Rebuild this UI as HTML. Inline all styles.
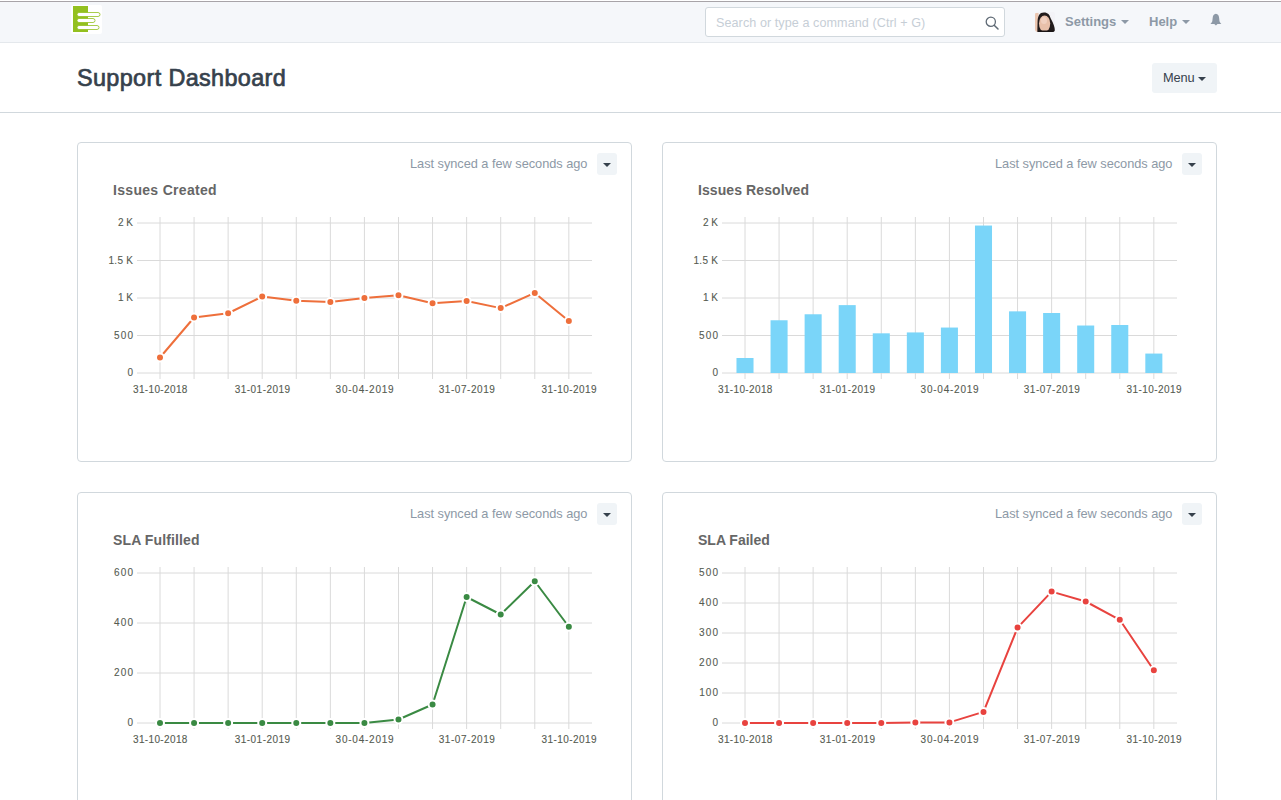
<!DOCTYPE html>
<html><head><meta charset="utf-8">
<style>
html,body{margin:0;padding:0;}
body{width:1281px;height:800px;overflow:hidden;position:relative;background:#fff;font-family:"Liberation Sans", sans-serif;}
.topline{position:absolute;left:0;top:1px;width:1281px;height:1px;background:#a8a4a8;}
.nav{position:absolute;left:0;top:2px;width:1281px;height:40px;background:#f5f7fa;border-bottom:1px solid #e4e8ec;}
.search{position:absolute;left:705px;top:7px;width:298px;height:28px;border:1px solid #d1d8dd;border-radius:3px;background:#fff;}
.search .ph{position:absolute;left:10px;top:8px;font-size:12.6px;letter-spacing:0.07px;color:#c6ced6;white-space:nowrap;}
.navtxt{position:absolute;top:14px;font-size:13px;font-weight:bold;color:#8d99a6;white-space:nowrap;}
.ncaret{position:absolute;width:0;height:0;border-left:4px solid transparent;border-right:4px solid transparent;border-top:4px solid #8d99a6;}
.header{position:absolute;left:0;top:43px;width:1281px;height:69px;background:#fff;border-bottom:1px solid #d1d8dd;}
.h1{position:absolute;left:77px;top:65px;font-size:23.4px;letter-spacing:0.37px;color:#36414c;white-space:nowrap;-webkit-text-stroke:0.7px #36414c;}
.menubtn{position:absolute;left:1152px;top:63px;width:65px;height:30px;background:#f0f4f7;border-radius:3px;}
.menubtn span{position:absolute;left:11px;top:7.4px;font-size:12.8px;letter-spacing:-0.15px;color:#36414c;}
.card{position:absolute;width:553px;height:318px;border:1px solid #d1d8dd;border-radius:4px;background:#fff;}
.synced{position:absolute;font-size:12.8px;letter-spacing:-0.04px;color:#8d99a6;white-space:nowrap;}
.ddbtn{position:absolute;width:20px;height:22px;background:#f0f4f7;border-radius:3px;}
.caret{position:absolute;left:6px;top:10px;width:0;height:0;border-left:4px solid transparent;border-right:4px solid transparent;border-top:4px solid #36414c;}
.ctitle{position:absolute;font-size:14px;font-weight:bold;color:#666;white-space:nowrap;}
svg.charts{position:absolute;left:0;top:0;}
svg text{font-family:"Liberation Sans", sans-serif;}
</style></head><body>
<div class="topline"></div>
<div class="nav"></div>
<svg style="position:absolute;left:70px;top:4px" width="33" height="32" viewBox="0 0 33 32">
<rect x="1" y="1" width="31" height="29" rx="2" fill="#fff"/>
<rect x="3" y="2" width="15" height="26" fill="#93c01f"/>
<rect x="7" y="8.5" width="23" height="4" rx="2" fill="#fff" stroke="#93c01f" stroke-width="0.8"/>
<rect x="7" y="14.5" width="18" height="4" rx="2" fill="#fff" stroke="#93c01f" stroke-width="0.8"/>
<rect x="7" y="21.5" width="22" height="4" rx="2" fill="#fff" stroke="#93c01f" stroke-width="0.8"/>
</svg>
<div class="search"><span class="ph">Search or type a command (Ctrl + G)</span>
<svg style="position:absolute;left:279px;top:8px" width="14" height="14" viewBox="0 0 14 14"><circle cx="5.8" cy="5.8" r="4.6" fill="none" stroke="#5f6a75" stroke-width="1.3"/><line x1="9.2" y1="9.2" x2="13" y2="13" stroke="#5f6a75" stroke-width="1.5" stroke-linecap="round"/></svg>
</div>
<svg style="position:absolute;left:1035px;top:12px" width="20" height="20" viewBox="0 0 20 20">
<defs><clipPath id="avc"><rect x="0" y="0" width="20" height="20" rx="3"/></clipPath></defs>
<g clip-path="url(#avc)">
<rect width="20" height="20" fill="#f2f2f5"/>
<rect x="0" y="1" width="3.5" height="19" fill="#ebc6b0"/>
<path d="M2.3,20 L2.6,9 C3,4 4.5,0.6 9,0.6 C13,0.6 14.5,3 15.5,6 C17.5,10 20,14 20,20 Z" fill="#221c1c"/>
<ellipse cx="9.6" cy="11.6" rx="5.6" ry="8.2" fill="#e8c0aa"/>
<ellipse cx="9" cy="8.5" rx="3" ry="3.5" fill="#f0d0c0"/>
<path d="M12.5,0 L20,0 L20,12 C18.5,7 16,2.5 12.5,0Z" fill="#f3f3f7"/>
<rect x="3" y="18.5" width="17" height="1.5" fill="#1a1515"/>
</g></svg>
<div class="navtxt" style="left:1065px">Settings</div>
<div class="ncaret" style="left:1121px;top:20px"></div>
<div class="navtxt" style="left:1149px">Help</div>
<div class="ncaret" style="left:1182px;top:20px"></div>
<svg style="position:absolute;left:1210px;top:13px" width="12" height="14" viewBox="0 0 12 14"><path d="M5.9,0.8 C3.8,1 2.9,2.5 2.7,4.8 L2.3,8.2 C2,9.4 1,10.2 0.4,10.9 L11.4,10.9 C10.8,10.2 9.8,9.4 9.5,8.2 L9.1,4.8 C8.9,2.5 8,1 5.9,0.8Z" fill="#8d99a6"/><path d="M4.3,10.9 L7.5,10.9 L5.9,12.6Z" fill="#8d99a6"/></svg>
<div class="header"></div>
<div class="h1">Support Dashboard</div>
<div class="menubtn"><span>Menu</span><span class="caret" style="left:46px;top:14px"></span></div>
<div class="card" style="left:77px;top:142px"></div>
<div class="synced" style="left:410px;top:156px">Last synced a few seconds ago</div>
<div class="ddbtn" style="left:597px;top:153px"><span class="caret"></span></div>
<div class="ctitle" style="left:113px;top:182px;letter-spacing:0.31px">Issues Created</div>
<div class="card" style="left:662px;top:142px"></div>
<div class="synced" style="left:995px;top:156px">Last synced a few seconds ago</div>
<div class="ddbtn" style="left:1182px;top:153px"><span class="caret"></span></div>
<div class="ctitle" style="left:698px;top:182px;letter-spacing:0.09px">Issues Resolved</div>
<div class="card" style="left:77px;top:492px"></div>
<div class="synced" style="left:410px;top:506px">Last synced a few seconds ago</div>
<div class="ddbtn" style="left:597px;top:503px"><span class="caret"></span></div>
<div class="ctitle" style="left:113px;top:532px;letter-spacing:0.12px">SLA Fulfilled</div>
<div class="card" style="left:662px;top:492px"></div>
<div class="synced" style="left:995px;top:506px">Last synced a few seconds ago</div>
<div class="ddbtn" style="left:1182px;top:503px"><span class="caret"></span></div>
<div class="ctitle" style="left:698px;top:532px;letter-spacing:0.0px">SLA Failed</div>

<svg class="charts" width="1281" height="800"><g transform="translate(0,0)"><g stroke="#dadada" stroke-width="1" shape-rendering="auto"><line x1="137" y1="373.00" x2="592" y2="373.00" /><line x1="137" y1="335.50" x2="592" y2="335.50" /><line x1="137" y1="298.00" x2="592" y2="298.00" /><line x1="137" y1="260.50" x2="592" y2="260.50" /><line x1="137" y1="223.00" x2="592" y2="223.00" /><line x1="160.00" y1="217" x2="160.00" y2="379" /><line x1="194.07" y1="217" x2="194.07" y2="379" /><line x1="228.14" y1="217" x2="228.14" y2="379" /><line x1="262.21" y1="217" x2="262.21" y2="379" /><line x1="296.28" y1="217" x2="296.28" y2="379" /><line x1="330.35" y1="217" x2="330.35" y2="379" /><line x1="364.42" y1="217" x2="364.42" y2="379" /><line x1="398.49" y1="217" x2="398.49" y2="379" /><line x1="432.56" y1="217" x2="432.56" y2="379" /><line x1="466.63" y1="217" x2="466.63" y2="379" /><line x1="500.70" y1="217" x2="500.70" y2="379" /><line x1="534.77" y1="217" x2="534.77" y2="379" /><line x1="568.84" y1="217" x2="568.84" y2="379" /></g><g fill="#555b51" font-size="10" stroke="#555b51" stroke-width="0.1"><text x="133.00" y="376.20" text-anchor="end" letter-spacing="0.0">0</text><text x="134.10" y="338.70" text-anchor="end" letter-spacing="1.1">500</text><text x="133.00" y="301.20" text-anchor="end" letter-spacing="0.0">1 K</text><text x="133.30" y="263.70" text-anchor="end" letter-spacing="0.3">1.5 K</text><text x="133.00" y="226.20" text-anchor="end" letter-spacing="0.0">2 K</text><text x="160.38" y="393" text-anchor="middle" letter-spacing="0.36">31-10-2018</text><text x="262.64" y="393" text-anchor="middle" letter-spacing="0.46">31-01-2019</text><text x="365.00" y="393" text-anchor="middle" letter-spacing="0.77">30-04-2019</text><text x="467.11" y="393" text-anchor="middle" letter-spacing="0.56">31-07-2019</text><text x="569.25" y="393" text-anchor="middle" letter-spacing="0.42">31-10-2019</text></g><path d="M160.00,357.48L194.07,317.50L228.14,313.23L262.21,296.50L296.28,300.70L330.35,301.98L364.42,298.00L398.49,295.30L432.56,303.25L466.63,300.93L500.70,308.12L534.77,292.90L568.84,320.95" fill="none" stroke="#ee6f3b" stroke-width="2" stroke-linejoin="round" /><g fill="#ee6f3b" stroke="#fff" stroke-width="2"><circle cx="160.00" cy="357.48" r="4" /><circle cx="194.07" cy="317.50" r="4" /><circle cx="228.14" cy="313.23" r="4" /><circle cx="262.21" cy="296.50" r="4" /><circle cx="296.28" cy="300.70" r="4" /><circle cx="330.35" cy="301.98" r="4" /><circle cx="364.42" cy="298.00" r="4" /><circle cx="398.49" cy="295.30" r="4" /><circle cx="432.56" cy="303.25" r="4" /><circle cx="466.63" cy="300.93" r="4" /><circle cx="500.70" cy="308.12" r="4" /><circle cx="534.77" cy="292.90" r="4" /><circle cx="568.84" cy="320.95" r="4" /></g></g><g transform="translate(585,0)"><g stroke="#dadada" stroke-width="1" shape-rendering="auto"><line x1="137" y1="373.00" x2="592" y2="373.00" /><line x1="137" y1="335.50" x2="592" y2="335.50" /><line x1="137" y1="298.00" x2="592" y2="298.00" /><line x1="137" y1="260.50" x2="592" y2="260.50" /><line x1="137" y1="223.00" x2="592" y2="223.00" /><line x1="160.00" y1="217" x2="160.00" y2="379" /><line x1="194.07" y1="217" x2="194.07" y2="379" /><line x1="228.14" y1="217" x2="228.14" y2="379" /><line x1="262.21" y1="217" x2="262.21" y2="379" /><line x1="296.28" y1="217" x2="296.28" y2="379" /><line x1="330.35" y1="217" x2="330.35" y2="379" /><line x1="364.42" y1="217" x2="364.42" y2="379" /><line x1="398.49" y1="217" x2="398.49" y2="379" /><line x1="432.56" y1="217" x2="432.56" y2="379" /><line x1="466.63" y1="217" x2="466.63" y2="379" /><line x1="500.70" y1="217" x2="500.70" y2="379" /><line x1="534.77" y1="217" x2="534.77" y2="379" /><line x1="568.84" y1="217" x2="568.84" y2="379" /></g><g fill="#555b51" font-size="10" stroke="#555b51" stroke-width="0.1"><text x="133.00" y="376.20" text-anchor="end" letter-spacing="0.0">0</text><text x="134.10" y="338.70" text-anchor="end" letter-spacing="1.1">500</text><text x="133.00" y="301.20" text-anchor="end" letter-spacing="0.0">1 K</text><text x="133.30" y="263.70" text-anchor="end" letter-spacing="0.3">1.5 K</text><text x="133.00" y="226.20" text-anchor="end" letter-spacing="0.0">2 K</text><text x="160.38" y="393" text-anchor="middle" letter-spacing="0.36">31-10-2018</text><text x="262.64" y="393" text-anchor="middle" letter-spacing="0.46">31-01-2019</text><text x="365.00" y="393" text-anchor="middle" letter-spacing="0.77">30-04-2019</text><text x="467.11" y="393" text-anchor="middle" letter-spacing="0.56">31-07-2019</text><text x="569.25" y="393" text-anchor="middle" letter-spacing="0.42">31-10-2019</text></g><g fill="#7ad5f9"><rect x="151.48" y="358.00" width="17.04" height="15.00" /><rect x="185.55" y="320.27" width="17.04" height="52.73" /><rect x="219.62" y="314.27" width="17.04" height="58.73" /><rect x="253.69" y="305.12" width="17.04" height="67.88" /><rect x="287.76" y="333.32" width="17.04" height="39.68" /><rect x="321.83" y="332.43" width="17.04" height="40.57" /><rect x="355.90" y="327.55" width="17.04" height="45.45" /><rect x="389.97" y="225.55" width="17.04" height="147.45" /><rect x="424.04" y="311.35" width="17.04" height="61.65" /><rect x="458.11" y="313.00" width="17.04" height="60.00" /><rect x="492.18" y="325.52" width="17.04" height="47.48" /><rect x="526.25" y="325.00" width="17.04" height="48.00" /><rect x="560.32" y="353.57" width="17.04" height="19.43" /></g></g><g transform="translate(0,350)"><g stroke="#dadada" stroke-width="1" shape-rendering="auto"><line x1="137" y1="373.00" x2="592" y2="373.00" /><line x1="137" y1="323.00" x2="592" y2="323.00" /><line x1="137" y1="273.00" x2="592" y2="273.00" /><line x1="137" y1="223.00" x2="592" y2="223.00" /><line x1="160.00" y1="217" x2="160.00" y2="379" /><line x1="194.07" y1="217" x2="194.07" y2="379" /><line x1="228.14" y1="217" x2="228.14" y2="379" /><line x1="262.21" y1="217" x2="262.21" y2="379" /><line x1="296.28" y1="217" x2="296.28" y2="379" /><line x1="330.35" y1="217" x2="330.35" y2="379" /><line x1="364.42" y1="217" x2="364.42" y2="379" /><line x1="398.49" y1="217" x2="398.49" y2="379" /><line x1="432.56" y1="217" x2="432.56" y2="379" /><line x1="466.63" y1="217" x2="466.63" y2="379" /><line x1="500.70" y1="217" x2="500.70" y2="379" /><line x1="534.77" y1="217" x2="534.77" y2="379" /><line x1="568.84" y1="217" x2="568.84" y2="379" /></g><g fill="#555b51" font-size="10" stroke="#555b51" stroke-width="0.1"><text x="133.00" y="376.20" text-anchor="end" letter-spacing="0.0">0</text><text x="134.20" y="326.20" text-anchor="end" letter-spacing="1.2">200</text><text x="134.20" y="276.20" text-anchor="end" letter-spacing="1.2">400</text><text x="134.20" y="226.20" text-anchor="end" letter-spacing="1.2">600</text><text x="160.38" y="393" text-anchor="middle" letter-spacing="0.36">31-10-2018</text><text x="262.64" y="393" text-anchor="middle" letter-spacing="0.46">31-01-2019</text><text x="365.00" y="393" text-anchor="middle" letter-spacing="0.77">30-04-2019</text><text x="467.11" y="393" text-anchor="middle" letter-spacing="0.56">31-07-2019</text><text x="569.25" y="393" text-anchor="middle" letter-spacing="0.42">31-10-2019</text></g><path d="M160.00,373.00L194.07,373.00L228.14,373.00L262.21,373.00L296.28,373.00L330.35,373.00L364.42,373.00L398.49,369.50L432.56,354.50L466.63,247.00L500.70,264.50L534.77,231.25L568.84,276.75" fill="none" stroke="#3a8a43" stroke-width="2" stroke-linejoin="round" /><g fill="#3a8a43" stroke="#fff" stroke-width="2"><circle cx="160.00" cy="373.00" r="4" /><circle cx="194.07" cy="373.00" r="4" /><circle cx="228.14" cy="373.00" r="4" /><circle cx="262.21" cy="373.00" r="4" /><circle cx="296.28" cy="373.00" r="4" /><circle cx="330.35" cy="373.00" r="4" /><circle cx="364.42" cy="373.00" r="4" /><circle cx="398.49" cy="369.50" r="4" /><circle cx="432.56" cy="354.50" r="4" /><circle cx="466.63" cy="247.00" r="4" /><circle cx="500.70" cy="264.50" r="4" /><circle cx="534.77" cy="231.25" r="4" /><circle cx="568.84" cy="276.75" r="4" /></g></g><g transform="translate(585,350)"><g stroke="#dadada" stroke-width="1" shape-rendering="auto"><line x1="137" y1="373.00" x2="592" y2="373.00" /><line x1="137" y1="343.00" x2="592" y2="343.00" /><line x1="137" y1="313.00" x2="592" y2="313.00" /><line x1="137" y1="283.00" x2="592" y2="283.00" /><line x1="137" y1="253.00" x2="592" y2="253.00" /><line x1="137" y1="223.00" x2="592" y2="223.00" /><line x1="160.00" y1="217" x2="160.00" y2="379" /><line x1="194.07" y1="217" x2="194.07" y2="379" /><line x1="228.14" y1="217" x2="228.14" y2="379" /><line x1="262.21" y1="217" x2="262.21" y2="379" /><line x1="296.28" y1="217" x2="296.28" y2="379" /><line x1="330.35" y1="217" x2="330.35" y2="379" /><line x1="364.42" y1="217" x2="364.42" y2="379" /><line x1="398.49" y1="217" x2="398.49" y2="379" /><line x1="432.56" y1="217" x2="432.56" y2="379" /><line x1="466.63" y1="217" x2="466.63" y2="379" /><line x1="500.70" y1="217" x2="500.70" y2="379" /><line x1="534.77" y1="217" x2="534.77" y2="379" /><line x1="568.84" y1="217" x2="568.84" y2="379" /></g><g fill="#555b51" font-size="10" stroke="#555b51" stroke-width="0.1"><text x="133.00" y="376.20" text-anchor="end" letter-spacing="0.0">0</text><text x="134.00" y="346.20" text-anchor="end" letter-spacing="1.0">100</text><text x="134.20" y="316.20" text-anchor="end" letter-spacing="1.2">200</text><text x="134.20" y="286.20" text-anchor="end" letter-spacing="1.2">300</text><text x="134.20" y="256.20" text-anchor="end" letter-spacing="1.2">400</text><text x="134.10" y="226.20" text-anchor="end" letter-spacing="1.1">500</text><text x="160.38" y="393" text-anchor="middle" letter-spacing="0.36">31-10-2018</text><text x="262.64" y="393" text-anchor="middle" letter-spacing="0.46">31-01-2019</text><text x="365.00" y="393" text-anchor="middle" letter-spacing="0.77">30-04-2019</text><text x="467.11" y="393" text-anchor="middle" letter-spacing="0.56">31-07-2019</text><text x="569.25" y="393" text-anchor="middle" letter-spacing="0.42">31-10-2019</text></g><path d="M160.00,373.00L194.07,373.00L228.14,373.00L262.21,373.00L296.28,373.00L330.35,372.40L364.42,372.40L398.49,361.90L432.56,277.60L466.63,241.60L500.70,251.50L534.77,269.80L568.84,320.20" fill="none" stroke="#e8433f" stroke-width="2" stroke-linejoin="round" /><g fill="#e8433f" stroke="#fff" stroke-width="2"><circle cx="160.00" cy="373.00" r="4" /><circle cx="194.07" cy="373.00" r="4" /><circle cx="228.14" cy="373.00" r="4" /><circle cx="262.21" cy="373.00" r="4" /><circle cx="296.28" cy="373.00" r="4" /><circle cx="330.35" cy="372.40" r="4" /><circle cx="364.42" cy="372.40" r="4" /><circle cx="398.49" cy="361.90" r="4" /><circle cx="432.56" cy="277.60" r="4" /><circle cx="466.63" cy="241.60" r="4" /><circle cx="500.70" cy="251.50" r="4" /><circle cx="534.77" cy="269.80" r="4" /><circle cx="568.84" cy="320.20" r="4" /></g></g></svg>
</body></html>
